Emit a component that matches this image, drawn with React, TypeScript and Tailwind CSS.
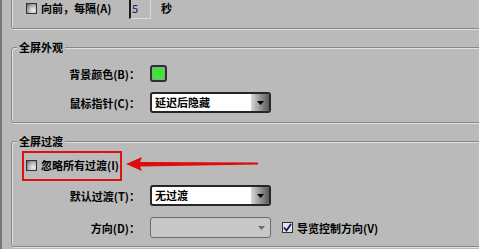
import React from 'react';

const font = { fontFamily: '"Noto Sans CJK SC", "Noto Sans", sans-serif' };

const CheckBox: React.FC<{ checked?: boolean }> = ({ checked }) => (
    <div
        className={`w-[11px] h-[11px] shrink-0 border border-[#333333] flex items-center justify-center ${checked ? 'bg-[#e4e4e4]' : 'bg-[radial-gradient(circle_at_70%_70%,#f4f4f4_0%,#b0b0b0_55%,#5c5c5c_100%)]'}`}
    >
        {checked && (
            <svg width="9" height="9" viewBox="0 0 9 9">
                <path d="M1 4.5 L3.5 7.5 L8 1" stroke="#0a1a6a" strokeWidth="1.8" fill="none" />
            </svg>
        )}
    </div>
);

const Select: React.FC<{ value?: string; disabled?: boolean }> = ({ value, disabled }) => {
    if (disabled) {
        return (
            <div className="w-[121px] h-[21px] rounded-[3px] border border-[#6c6c6c] bg-[#c8c8c8] flex items-center justify-end pr-[5px]">
                <svg width="7" height="4" viewBox="0 0 7 4"><path d="M0 0 H7 L3.5 4 Z" fill="#6a6a6a" /></svg>
            </div>
        );
    }
    return (
        <div className="w-[121px] h-[21px] rounded-[3px] border-2 border-[#262626] bg-white flex items-stretch overflow-hidden">
            <span className="flex-1 pl-[3px] text-[11px] leading-[17px] font-bold text-black">{value}</span>
            <div className="w-[18px] bg-linear-to-r from-[#d8d8d8] to-[#5a5a5a] flex items-center justify-center">
                <svg width="7" height="4" viewBox="0 0 7 4"><path d="M0 0 H7 L3.5 4 Z" fill="#000" /></svg>
            </div>
        </div>
    );
};

const Group: React.FC<{ title?: string; className?: string; children: React.ReactNode }> = ({ title, className, children }) => (
    <div className={`relative ml-[9px] w-[480px] rounded-[3px] border border-[#7d8a93] shadow-[1px_1px_0_#dbe3e9,inset_1px_1px_0_#dbe3e9] ${className ?? ''}`}>
        {title && (
            <span className="absolute -top-[8px] left-[5px] px-[2px] bg-[#bababa] text-[11px] leading-[14px] font-bold text-black">
                {title}
            </span>
        )}
        {children}
    </div>
);

const Label: React.FC<{ children: React.ReactNode }> = ({ children }) => (
    <span className="w-[138px] shrink-0 text-right pr-[10px] text-[11px] leading-[14px] font-bold text-black">{children}</span>
);

export default function App() {
    return (
        <div style={font} className="w-[479px] h-[249px] overflow-hidden bg-[#bababa] border-l-2 border-[#767676]">
            {/* 上一组（顶部被裁掉） */}
            <Group className="-mt-[6px] h-[35px] pt-[2px]">
                <div className="flex items-center h-[22px] pl-[14px]">
                    <CheckBox />
                    <span className="w-[92px] pl-[4px] text-[11px] leading-[14px] font-bold text-black">向前，每隔(A)</span>
                    <div className="w-[22px] h-[22px] border-l-2 border-t-2 border-[#1a1a1a] border-r border-b border-r-[#dcdcdc] border-b-[#dcdcdc] pl-[1px] text-[11px] leading-[18px] text-[#10206a]">5</div>
                    <span className="ml-[10px] text-[11px] leading-[14px] font-bold text-black">秒</span>
                </div>
            </Group>

            <Group title="全屏外观" className="mt-[18px] h-[76px] pt-[17px]">
                <div className="flex items-center h-[17px]">
                    <Label>背景颜色(B)：</Label>
                    <div className="w-[17px] h-[17px] rounded-[3px] border-2 border-[#303030] bg-[#9c9c9c] p-[1px]">
                        <div className="w-full h-full bg-[#3be63b]" />
                    </div>
                </div>
                <div className="flex items-center h-[21px] mt-[10px]">
                    <Label>鼠标指针(C)：</Label>
                    <Select value="延迟后隐藏" />
                </div>
            </Group>

            <Group title="全屏过渡" className="mt-[18px] h-[106px] pt-[9px]">
                <div className="flex items-center h-[30px]">
                    <div className="ml-[10px] w-[100px] h-[30px] border-2 border-[#e01010] flex items-center pl-[2px] gap-[4px] pb-[2px]">
                        <CheckBox />
                        <span className="text-[11px] leading-[14px] font-bold text-black whitespace-nowrap">忽略所有过渡(I)</span>
                    </div>
                    <svg className="ml-[4px] -mt-[4px]" width="134" height="16" viewBox="0 0 134 16">
                        <path d="M0 8 L16 1 L14 6 L132 6.5 L132 8.5 L14 10.5 L16 15 Z" fill="#e00a0a" />
                    </svg>
                </div>
                <div className="flex items-center h-[21px] mt-[4px]">
                    <Label>默认过渡(T)：</Label>
                    <Select value="无过渡" />
                </div>
                <div className="flex items-center h-[21px] mt-[11px]">
                    <Label>方向(D)：</Label>
                    <Select disabled />
                    <div className="ml-[11px] flex items-center gap-[4px]">
                        <CheckBox checked />
                        <span className="text-[11px] leading-[14px] font-bold text-black">导览控制方向(V)</span>
                    </div>
                </div>
            </Group>
        </div>
    );
}
